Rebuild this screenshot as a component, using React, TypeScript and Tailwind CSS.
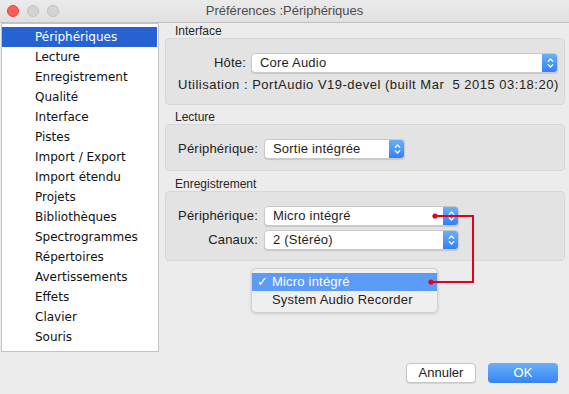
import React from "react";

const Chevrons = () => (
  <svg width="9" height="14" viewBox="0 0 9 14" fill="none" stroke="white" strokeWidth="1.3" strokeLinecap="round" strokeLinejoin="round">
    <path d="M2.2 5.4 L4.5 3 L6.8 5.4" />
    <path d="M2.2 8.6 L4.5 11 L6.8 8.6" />
  </svg>
);

function Select({ w, text }: { w: string; text: string }) {
  return (
    <div className={`flex h-[20px] rounded-[4px] bg-white border border-[#c9c9c9] shadow-[0_1px_1px_rgba(0,0,0,0.13)] overflow-hidden ${w}`}>
      <div className="flex-1 pl-[8px] text-[13px] tracking-[0.2px] leading-[18px] text-[#1e1e1e] whitespace-nowrap">{text}</div>
      <div className="w-[16px] -my-[1px] -mr-[1px] bg-linear-to-b from-[#6cb2fa] to-[#2d7ef4] flex items-center justify-center">
        <Chevrons />
      </div>
    </div>
  );
}

const items = [
  "Périphériques",
  "Lecture",
  "Enregistrement",
  "Qualité",
  "Interface",
  "Pistes",
  "Import / Export",
  "Import étendu",
  "Projets",
  "Bibliothèques",
  "Spectrogrammes",
  "Répertoires",
  "Avertissements",
  "Effets",
  "Clavier",
  "Souris",
];

export default function App() {
  return (
    <div className="relative w-[569px] h-[394px] bg-[#ececec] overflow-hidden font-['Liberation_Sans',Arial,sans-serif]">
      {/* Title bar */}
      <div className="relative h-[23px] border-b border-[#c2c2c2] bg-linear-to-b from-[#ebebeb] to-[#e0e0e0] flex items-center justify-center">
        <div className="absolute left-[7px] top-[5px] flex gap-[8px]">
          <div className="w-[12px] h-[12px] rounded-full bg-[#fc5f57] border border-[#e0443e]" />
          <div className="w-[12px] h-[12px] rounded-full bg-[#d3d3d3] border border-[#c2c2c2]" />
          <div className="w-[12px] h-[12px] rounded-full bg-[#d3d3d3] border border-[#c2c2c2]" />
        </div>
        <span className="text-[13px] text-[#4d4d4d]">Préférences :Périphériques</span>
      </div>

      <div className="flex h-[371px]">
        {/* Sidebar */}
        <div className="ml-[1px] w-[158px] h-[329px] bg-white border border-[#c4c4c4] pt-[3px] font-['DejaVu_Sans',sans-serif]">
          {items.map((it, i) => (
            <div
              key={it}
              className={`h-[20px] leading-[20px] pl-[33px] mr-[1px] text-[12px] ${i === 0 ? "bg-[#2762d3] text-white" : "text-[#111]"}`}
            >
              {it}
            </div>
          ))}
        </div>

        {/* Main */}
        <div className="flex-1 ml-[6px] mr-[4px] flex flex-col">
          <div className="mt-[1px] h-[14px] leading-[14px] text-[12px] pl-[10px] text-[#262626]">Interface</div>
          <div className="h-[67px] rounded-[4px] bg-[#e3e3e3] border border-[#d7d7d7] pt-[14px]">
            <div className="flex items-center">
              <div className="w-[80px] text-right text-[13px] tracking-[0.2px] text-[#222]">Hôte:</div>
              <div className="ml-[5px]">
                <Select w="w-[307px]" text="Core Audio" />
              </div>
            </div>
            <div className="mt-[4px] pl-[12px] text-[13px] tracking-[0.5px] leading-[16px] text-[#222] whitespace-pre">
              Utilisation : PortAudio V19-devel (built Mar  5 2015 03:18:20)
            </div>
          </div>

          <div className="mt-[5px] h-[14px] leading-[14px] text-[12px] pl-[10px] text-[#262626]">Lecture</div>
          <div className="h-[47px] rounded-[4px] bg-[#e3e3e3] border border-[#d7d7d7] pt-[14px]">
            <div className="flex items-center">
              <div className="w-[92px] text-right text-[13px] tracking-[0.2px] text-[#222]">Périphérique:</div>
              <div className="ml-[6px]">
                <Select w="w-[141px]" text="Sortie intégrée" />
              </div>
            </div>
          </div>

          <div className="mt-[6px] h-[14px] leading-[14px] text-[12px] pl-[10px] text-[#262626]">Enregistrement</div>
          <div className="h-[70px] rounded-[4px] bg-[#e3e3e3] border border-[#d7d7d7] pt-[14px] flex flex-col gap-[4px]">
            <div className="flex items-center">
              <div className="w-[92px] text-right text-[13px] tracking-[0.2px] text-[#222]">Périphérique:</div>
              <div className="ml-[6px]">
                <Select w="w-[195px]" text="Micro intégré" />
              </div>
            </div>
            <div className="flex items-center">
              <div className="w-[92px] text-right text-[13px] tracking-[0.2px] text-[#222]">Canaux:</div>
              <div className="ml-[6px]">
                <Select w="w-[195px]" text="2 (Stéréo)" />
              </div>
            </div>
          </div>

          <div className="mt-auto flex justify-end gap-[12px] pr-[7px] pb-[11px]">
            <div className="w-[70px] h-[20px] rounded-[4px] bg-white border border-[#c6c6c6] shadow-[0_1px_1px_rgba(0,0,0,0.1)] flex items-center justify-center text-[13px] text-[#222]">
              Annuler
            </div>
            <div className="w-[70px] h-[20px] rounded-[4px] bg-linear-to-b from-[#6aaff9] to-[#3583f1] flex items-center justify-center text-[13px] text-white">
              OK
            </div>
          </div>
        </div>
      </div>

      {/* Popup menu */}
      <div className="absolute left-[251px] top-[268px] w-[187px] h-[45px] rounded-[5px] bg-[#efefef] border border-[#d2d2d2] shadow-[0_1px_3px_rgba(0,0,0,0.15)] pt-[4px]">
        <div className="relative h-[18px] bg-[#5c9cf6] text-white text-[13px] tracking-[0.2px] leading-[18px] pl-[20px]">
          <span className="absolute left-[5px] top-0 text-[13px] font-['DejaVu_Sans',sans-serif]">✓</span>
          Micro intégré
        </div>
        <div className="h-[18px] text-[#222] text-[13px] tracking-[0.2px] leading-[18px] pl-[20px]">System Audio Recorder</div>
      </div>

      {/* Annotation */}
      <svg className="absolute left-0 top-0 pointer-events-none" width="569" height="394">
        <polyline points="435,216 473,216 473,282 431,282" fill="none" stroke="#e3001b" strokeWidth="2" />
        <circle cx="435" cy="216" r="2.6" fill="#e3001b" />
        <circle cx="431" cy="282" r="2.6" fill="#e3001b" />
      </svg>
    </div>
  );
}
